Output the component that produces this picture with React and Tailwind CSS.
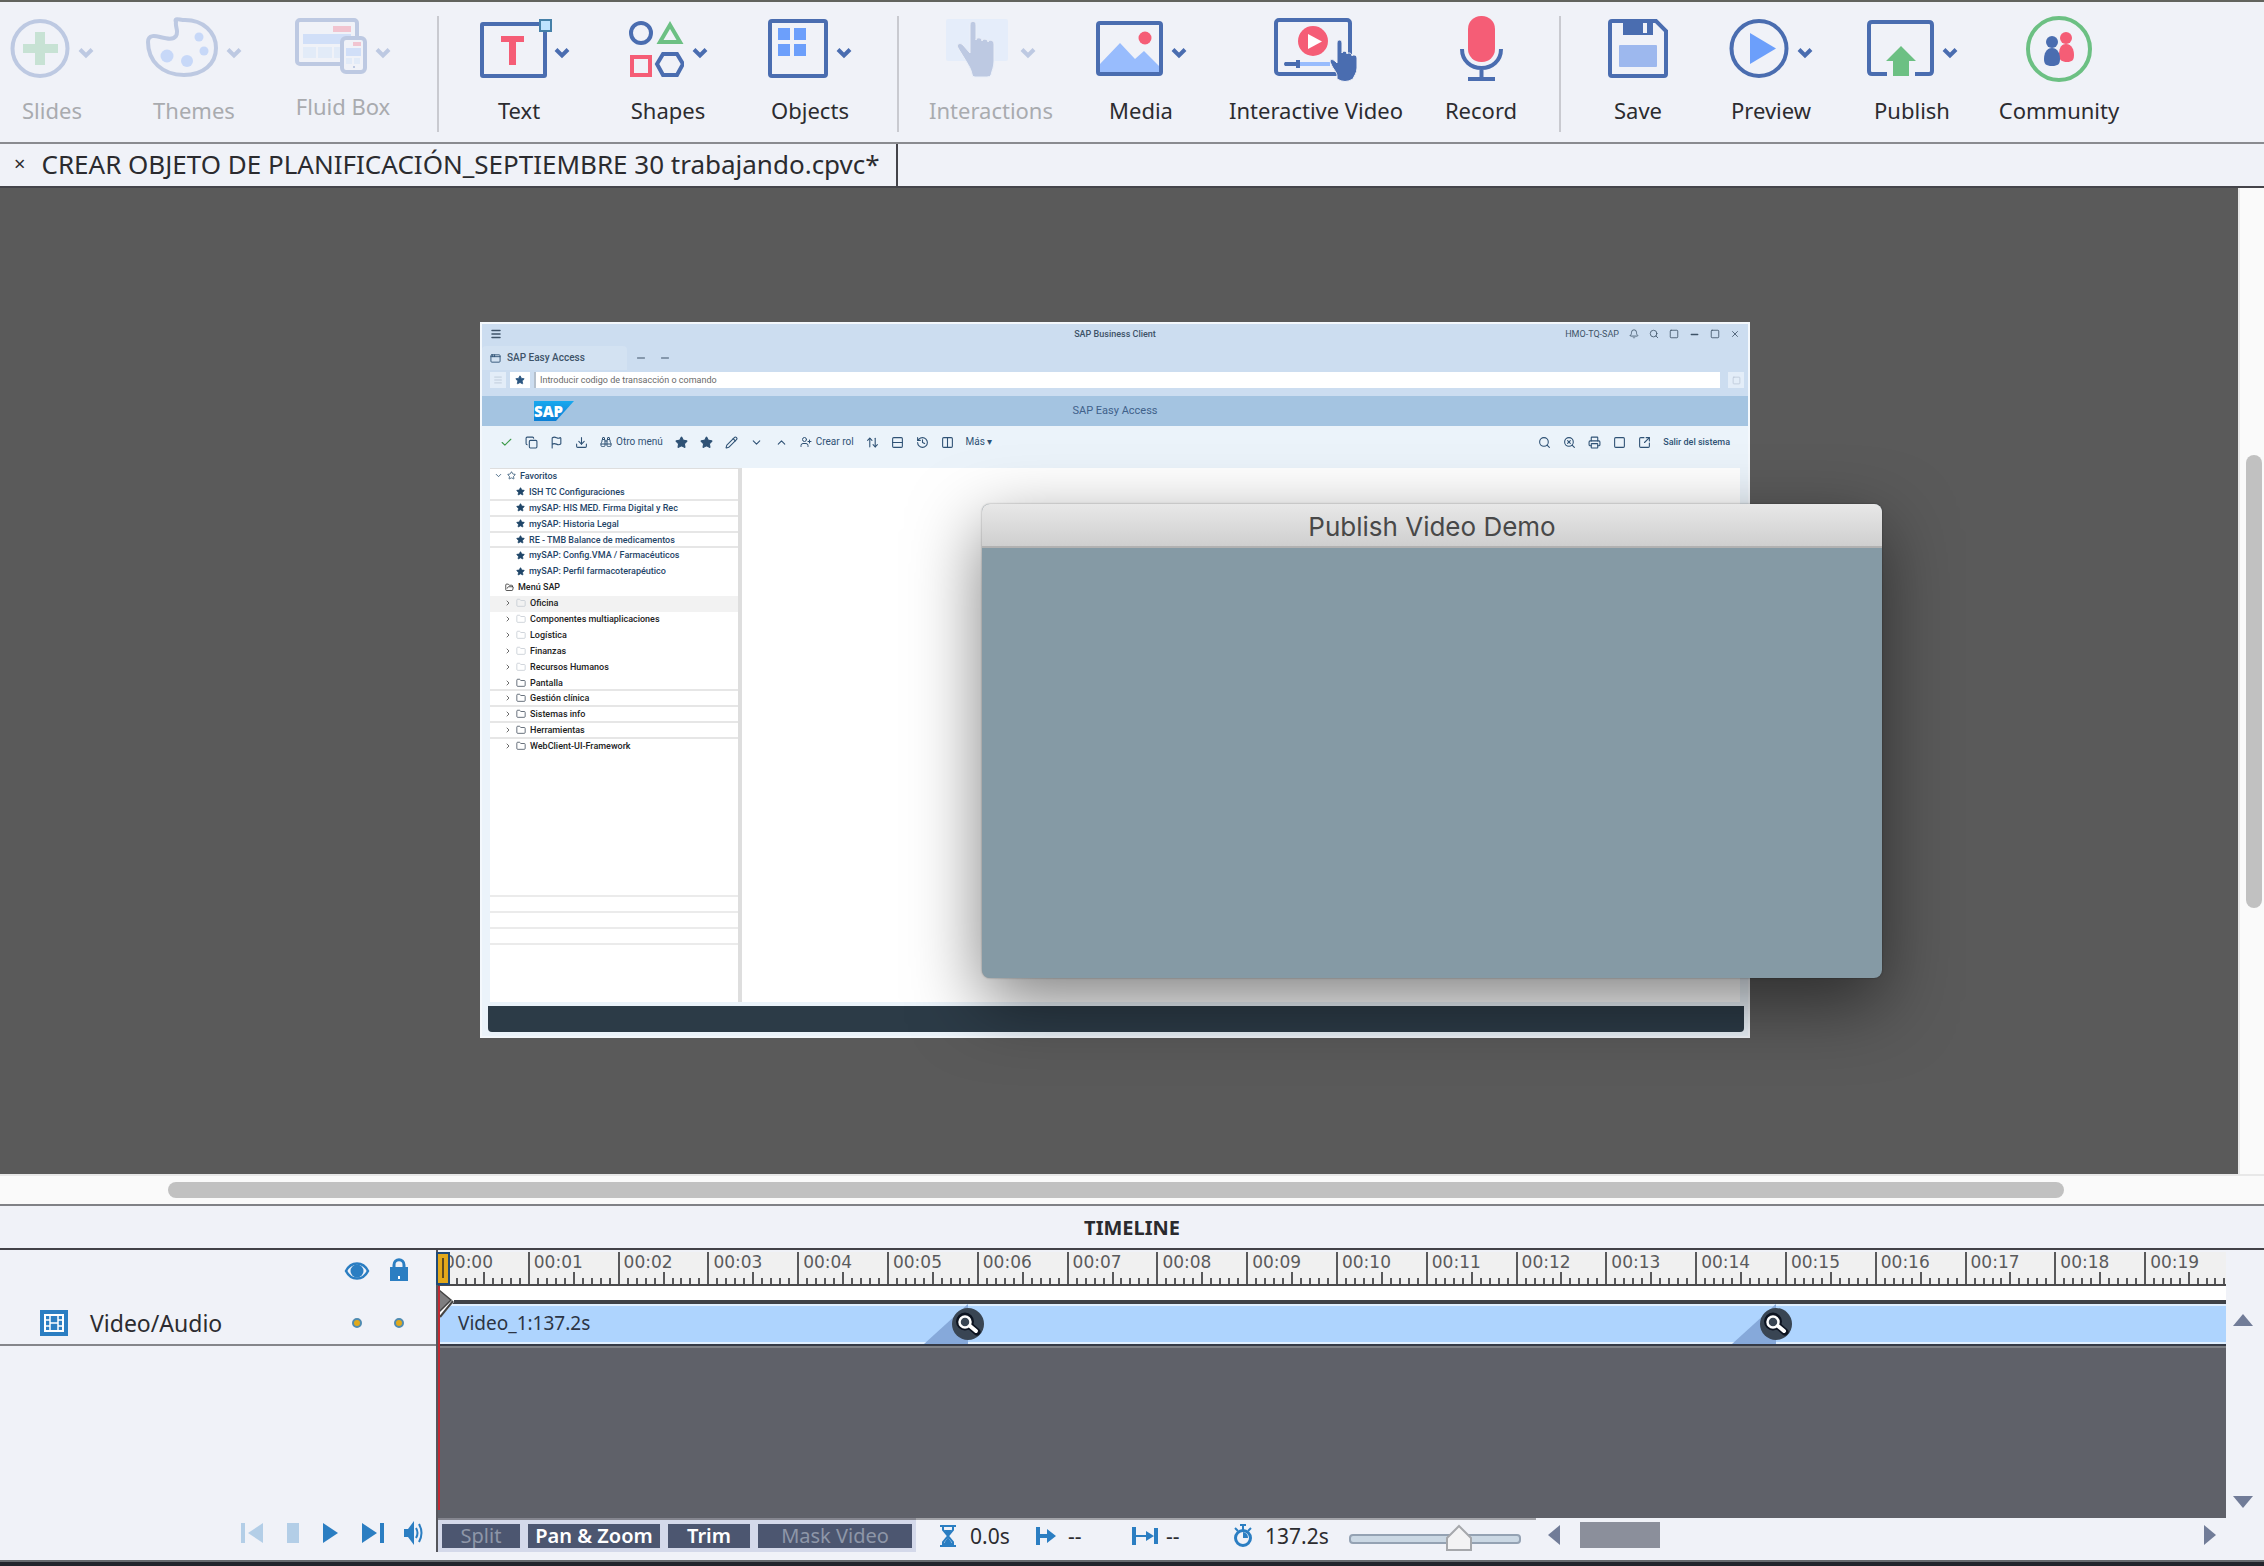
import { useState } from 'react';
import clsx from 'clsx';
import {
  Check, Copy, Flag, Download, Binoculars, Star, Pencil, ChevronDown, ChevronUp, ChevronRight, Menu,
  AppWindow, Search, SearchX, Printer, Square, SquareArrowOutUpRight, UserPlus, Folder, FolderOpen, Minus, X,
  ArrowUpDown, Columns2, Rows2, Bell, History,
} from 'lucide-react';

const BLUE = '#4a6db0';
const GREEN = '#6cc083';
const RED = '#f55d76';

const Chevron = () => (
  <svg width="16" height="66" viewBox="0 0 16 66" fill="none" stroke={BLUE} strokeWidth="4">
    <path d="M2 33.5 8 39.5 14 33.5" />
  </svg>
);

const HAND = 'M26 58c-1-5-3-8-6-13l-8-13c-2-4 2-6 5-3l7 8V9c0-5 6-5 6 0v15c0-3 6-3 6 1 1-3 6-2 6 1 1-3 6-2 6 2v17c0 6-2 9-3 14q-1 2-4 2H29q-3 0-3-3Z';

const ICONS = {
  slides: { w: 60, art: <>
    <circle cx="30" cy="32.5" r="27.5" fill="none" stroke={BLUE} strokeWidth="4" />
    <path d="M25 16h10v12h13v9H35v12H25V37H13v-9h12Z" fill={GREEN} />
  </> },
  themes: { w: 72, art: <>
    <path d="M30 6C28 1 33 4 39 4c18 0 31 12 31 28S57 59 38 59C16 59 2 45 2 26c0-8 8-6 12-5 8 2 13 3 16-1 3-5-1-9 0-14Z" fill="none" stroke={BLUE} strokeWidth="4" strokeLinejoin="round" />
    <g fill="#6c9ffb"><circle cx="21" cy="40" r="6.5" /><circle cx="41" cy="45" r="6" /><circle cx="58" cy="35" r="4.5" /><circle cx="53" cy="21" r="4.5" /></g>
  </> },
  fluid: { w: 72, art: <>
    <rect x="2" y="4" width="60" height="44" rx="3" fill="none" stroke={BLUE} strokeWidth="4" />
    <rect x="38" y="10" width="18" height="6" fill={RED} />
    <path d="M8 18h48v10H8Z" fill="#8db6fb" />
    <path d="M8 31h13v11H8ZM23 31h14v11H23ZM39 31h10v11H39Z" fill="#c3dcfb" />
    <rect x="47" y="22" width="23" height="34" rx="4" fill="#f0f2f8" stroke={BLUE} strokeWidth="4" />
    <rect x="58" y="26" width="8" height="4" fill={RED} />
    <path d="M51 32h15v8H51Z" fill="#8db6fb" />
    <path d="M51 42h6v6h-6ZM59 42h6v6h-6Z" fill="#c3dcfb" />
    <rect x="58" y="50" width="2" height="2" fill={BLUE} />
  </> },
  text: { w: 72, art: <>
    <rect x="2" y="8" width="63" height="52" rx="1" fill="none" stroke={BLUE} strokeWidth="4" />
    <rect x="60" y="4" width="11" height="11" fill="#bfe3ff" stroke="#4580a8" strokeWidth="2" />
    <path d="M21 20h23v6h-8v23h-7V26h-8Z" fill={RED} />
  </> },
  shapes: { w: 55, art: <g fill="none" strokeWidth="4">
    <circle cx="12" cy="17" r="10" stroke={BLUE} />
    <path d="M41 9 51 26H31Z" stroke={GREEN} />
    <rect x="3" y="41" width="18" height="18" stroke={RED} />
    <path d="M34 38h14l6 10-6 11H34l-6-11Z" stroke={BLUE} />
  </g> },
  objects: { w: 60, art: <>
    <rect x="2" y="5" width="56" height="55" rx="2" fill="none" stroke={BLUE} strokeWidth="4" />
    <path d="M10 12h12v12H10ZM26 12h12v12H26ZM10 28h12v12H10ZM26 28h12v12H26Z" fill="#6c9ffb" />
  </> },
  interactions: { w: 62, art: <>
    <rect width="62" height="42" y="3" rx="2" fill="#cfe3ff" />
    <path d={HAND} fill={BLUE} stroke="#dfeafb" strokeWidth="1" />
  </> },
  media: { w: 67, art: <>
    <path d="M4 48 24 27l15 16 9-8 16 16v6H4Z" fill="#98bcfd" />
    <circle cx="49" cy="22" r="6.5" fill={RED} />
    <rect x="2" y="7" width="63" height="51" rx="2" fill="none" stroke={BLUE} strokeWidth="4" />
  </> },
  interactive: { w: 84, art: <>
    <rect x="2" y="4" width="74" height="54" rx="3" fill="none" stroke={BLUE} strokeWidth="4" />
    <circle cx="39" cy="25" r="15" fill={RED} />
    <path d="M34 18 48 25.500 34 33Z" fill="#fff" />
    <path d="M26 46h30v4H26Z" fill="#98bcfd" />
    <path d="M11 46h11v-2h4v8h-4v-2H11q-2-2 0-4Z" fill={BLUE} />
    <path d="M63 60c0-4-4-7-6-12-2-4 0-6 4-3l2 2V27c0-4 5-4 5 0v10c1-3 5-2 5 1 1-2 5-1 5 2 1-2 5-1 5 2v10c0 5-3 8-4 11q-8 5-16 0Z" fill={BLUE} stroke="#f0f2f8" strokeWidth="1" />
  </> },
  record: { w: 43, art: <>
    <rect x="8" y="0" width="27" height="46" rx="13" fill={RED} />
    <path d="M2 33c0 12 9 19 19.500 19S41 45 41 33M21.500 52v12" fill="none" stroke={BLUE} strokeWidth="4" />
    <path d="M8 61h27v4H8Z" fill={BLUE} />
  </> },
  save: { w: 60, art: <>
    <path d="M4 5h44l10 10v43q0 2-2 2H4q-2 0-2-2V7q0-2 2-2Z" fill="none" stroke={BLUE} strokeWidth="4" />
    <path d="M15 5h30v14H15Z" fill={BLUE} />
    <path d="M35 7h4v10h-4Z" fill="#f0f2f8" />
    <rect x="11" y="29" width="38" height="22" rx="1" fill="#9db8ee" />
  </> },
  preview: { w: 60, art: <>
    <circle cx="30" cy="32.5" r="27.5" fill="none" stroke={BLUE} strokeWidth="4" />
    <path d="M21 17 47 32.500 21 48Z" fill="#6c9ffb" />
  </> },
  publish: { w: 67, art: <>
    <path d="M20 58H5q-3 0-3-3V9q0-3 3-3h57q3 0 3 3v46q0 3-3 3H48" fill="none" stroke={BLUE} strokeWidth="4" />
    <path d="M34 30 49 45h-7v15H26V45h-7Z" fill={GREEN} />
  </> },
  community: { w: 66, art: <>
    <circle cx="33" cy="33" r="31" fill="none" stroke={GREEN} strokeWidth="4" />
    <g fill={RED}><circle cx="40" cy="22" r="6" /><path d="M40 28c6 0 8 6 8 11s-2 7-7 7-8-2-8-7 1-11 7-11Z" /></g>
    <g fill={BLUE}><circle cx="26" cy="26" r="6" /><path d="M26 32c6 0 8 6 8 11s-2 7-8 7-8-2-8-7 2-11 8-11Z" /></g>
  </> },
};

const TOOL_GROUPS = [
  [
    { icon: 'slides', label: 'Slides', menu: true, off: true, box: 'w-[104px]' },
    { icon: 'themes', label: 'Themes', menu: true, off: true, box: 'w-[180px]' },
    { icon: 'fluid', label: 'Fluid Box', menu: true, off: true, box: 'w-[118px] mr-[35px]', gap: 'mt-2.5' },
  ],
  [
    { icon: 'text', label: 'Text', menu: true, box: 'w-[160px]', row: 'gap-0.5 pl-3' },
    { icon: 'shapes', label: 'Shapes', menu: true, box: 'w-[138px]' },
    { icon: 'objects', label: 'Objects', menu: true, box: 'w-[146px] mr-3.5' },
  ],
  [
    { icon: 'interactions', label: 'Interactions', menu: true, off: true, box: 'w-[184px]', row: 'gap-3' },
    { icon: 'media', label: 'Media', menu: true, box: 'w-[116px]' },
    { icon: 'interactive', label: 'Interactive Video', box: 'w-[234px]' },
    { icon: 'record', label: 'Record', box: 'w-24 mr-[30px]' },
  ],
  [
    { icon: 'save', label: 'Save', box: 'w-[154px]' },
    { icon: 'preview', label: 'Preview', menu: true, box: 'w-28' },
    { icon: 'publish', label: 'Publish', menu: true, box: 'w-[170px]' },
    { icon: 'community', label: 'Community', box: 'w-[124px]' },
  ],
];

function ToolButton({ icon, label, menu, off, box, row = 'gap-2', gap = 'mt-3.5' }) {
  const { w, art } = ICONS[icon];
  return (
    <button disabled={off} className={clsx('flex shrink-0 flex-col items-center', box)}>
      <span className={clsx('flex justify-center', row, off && 'opacity-30')}>
        <svg width={w} height="66" viewBox={`0 0 ${w} 66`}>{art}</svg>
        {menu && <Chevron />}
      </span>
      <span className={clsx('whitespace-nowrap text-[22px] leading-7', gap, off ? 'text-[#a9abaf]' : 'text-[#2c2c30]')}>{label}</span>
    </button>
  );
}

function Toolbar() {
  return (
    <nav className="flex h-[144px] items-start overflow-hidden border-t-2 border-b-2 border-t-[#62645e] border-b-[#8a8b90] bg-[#f0f2f8] pt-3.5">
      {TOOL_GROUPS.map((group, i) => (
        <div key={i} className={clsx('flex', i < 3 && 'h-[116px] border-r-2 border-[#c9cad0]')}>
          {group.map((t) => <ToolButton key={t.icon} {...t} />)}
        </div>
      ))}
    </nav>
  );
}

const FAVS = [
  'ISH TC Configuraciones', 'mySAP: HIS MED. Firma Digital y Rec', 'mySAP: Historia Legal',
  'RE - TMB Balance de medicamentos', 'mySAP: Config.VMA / Farmacéuticos', 'mySAP: Perfil farmacoterapéutico',
];
const MENU = [
  'Oficina', 'Componentes multiaplicaciones', 'Logística', 'Finanzas', 'Recursos Humanos', 'Pantalla',
  'Gestión clínica', 'Sistemas info', 'Herramientas', 'WebClient-UI-Framework',
];
const SAP_TOOLS = [Check, Copy, Flag, Download];
const SAP_TOOLS_MID = [Star, Star, Pencil, ChevronDown, ChevronUp];
const SAP_TOOLS_END = [ArrowUpDown, Rows2, History, Columns2];
const SAP_TOOLS_RIGHT = [Search, SearchX, Printer, Square, SquareArrowOutUpRight];

function SapTree() {
  const row = 'flex flex-1 items-center border-b-2';
  return (
    <div className="flex w-[252px] shrink-0 flex-col border-t border-r-4 border-[#dedede] bg-white text-[9px] leading-3 font-medium text-[#1f4568]">
      <ul className="flex h-[286px] flex-col">
        <li className={clsx(row, 'border-transparent pl-1 gap-1')}><ChevronDown size={9} /><Star size={9} />Favoritos</li>
        {FAVS.map((f, i) => (
          <li key={f} className={clsx(row, 'gap-1 pl-[26px]', i < 4 ? 'border-[#e6e6e6]' : 'border-transparent')}>
            <Star size={9} fill="currentColor" />{f}
          </li>
        ))}
        <li className={clsx(row, 'border-transparent gap-1 pl-[15px] text-[#222]')}><FolderOpen size={9} />Menú SAP</li>
        {MENU.map((m, i) => (
          <li key={m} className={clsx(row, 'gap-1 pl-[14px] text-[#222]', i === 0 && 'bg-[#f2f2f2]', i > 4 && i < 9 ? 'border-[#e6e6e6]' : 'border-transparent')}>
            <ChevronRight size={8} /><Folder size={10} className={i < 5 ? 'text-[#c6ccd4]' : 'text-[#4b5563]'} />{m}
          </li>
        ))}
      </ul>
      <div className="mt-[140px] h-[50px] border-y-2 border-[#ebebeb]">
        <div className="mt-3.5 h-[18px] border-y-2 border-[#ebebeb]" />
      </div>
    </div>
  );
}

function SapFrame() {
  return (
    <div className="flex h-full flex-col border-2 border-[#f4f8fc] bg-[#ebf3fa] font-['Roboto',sans-serif] text-[10px] leading-3 text-[#3e5368]">
      <div className="flex flex-col bg-[#ccddf0]">
        <div className="grid h-5 grid-cols-3 items-center px-2">
          <Menu size={12} strokeWidth={3} />
          <span className="text-center text-[9px] font-medium">SAP Business Client</span>
          <span className="flex items-center justify-end gap-2.5 text-[9px]">
            HMO-TQ-SAP <Bell size={10} /><Search size={10} /><Square size={10} /><Minus size={11} strokeWidth={3} /><Square size={10} /><X size={10} />
          </span>
        </div>
        <div className="flex h-[28px] items-center">
          <span className="flex h-6 w-[145px] items-center gap-1.5 rounded-t bg-[#d3e2f2] pl-2 font-medium"><AppWindow size={11} className="text-[#2f5275]" />SAP Easy Access</span>
          <Minus size={12} className="ml-2" /><Minus size={12} className="ml-3" />
        </div>
        <div className="flex h-[24px] items-start gap-1 pr-1 pl-2">
          <span className="flex h-4 w-4 items-center justify-center bg-[#e3edf8] text-[#b9c6d6]"><Menu size={10} /></span>
          <span className="flex h-4 w-5 items-center justify-center bg-white text-[#2a5580]"><Star size={10} fill="currentColor" /></span>
          <input aria-label="Transacción" readOnly value="Introducir codigo de transacción o comando" className="h-4 min-w-0 flex-1 border-l-2 border-[#b5c0cc] bg-white px-1 text-[9px] text-[#6a6a6a]" />
          <span className="ml-1 flex h-4 w-4 items-center justify-center bg-[#e3edf8] text-[#b9c6d6]"><Square size={9} /></span>
        </div>
      </div>
      <div className="grid h-[30px] grid-cols-3 items-center bg-[#a4c4e1]">
        <span className="ml-[52px] flex h-5 w-10 items-center bg-[linear-gradient(180deg,#18a8ee,#0a7fd6)] font-['Noto_Sans',sans-serif] text-[15px] leading-none font-black text-white [clip-path:polygon(0_0,100%_0,55%_100%,0_100%)]">SAP</span>
        <span className="text-center text-[11px] text-[#3f618a]">SAP Easy Access</span>
      </div>
      <div className="flex h-[42px] items-start gap-3 px-[18px] pt-2.5 text-[#2f5275]">
        {SAP_TOOLS.map((I, i) => <I key={i} size={13} className={i === 0 ? 'text-[#3c9a48]' : ''} />)}
        <span className="flex items-center gap-1"><Binoculars size={12} />Otro menú</span>
        {SAP_TOOLS_MID.map((I, i) => <I key={i} size={13} fill={i < 2 ? 'currentColor' : 'none'} />)}
        <span className="flex items-center gap-1"><UserPlus size={12} />Crear rol</span>
        {SAP_TOOLS_END.map((I, i) => <I key={i} size={13} />)}
        <span>Más ▾</span>
        <span className="ml-auto flex gap-3">{SAP_TOOLS_RIGHT.map((I, i) => <I key={i} size={13} />)}</span>
        <span className="text-[9px] font-medium">Salir del sistema</span>
      </div>
      <div className="flex flex-1 pr-2 pl-2">
        <SapTree />
        <div className="flex-1 bg-white" />
      </div>
      <div className="mr-1 ml-1.5 mt-1 mb-1 h-[26px] rounded-b bg-[#2c3b47]" />
    </div>
  );
}

function PublishDialog() {
  return (
    <section role="dialog" aria-label="Publish Video Demo" className="absolute top-[182px] left-[502px] flex h-[474px] w-[900px] flex-col overflow-hidden rounded-lg bg-[#859aa5] shadow-[0_24px_70px_rgba(0,0,0,0.5),0_0_2px_rgba(0,0,0,0.4)]">
      <h2 className="h-11 border-b-2 border-[#b1b1b1] bg-linear-to-b from-[#e8e8e8] to-[#cfcfcf] text-center font-['Inter',sans-serif] text-[26px] leading-[46px] text-[#484848]">Publish Video Demo</h2>
    </section>
  );
}

const SPAN = 19.91; // seconds visible in the ruler
const SECONDS = Array.from({ length: 20 }, (_, i) => i);
const ZOOMS = [5.9, 14.9];

function Ruler() {
  return (
    <div className="relative flex h-[36px] border-t-2 border-b-2 border-t-[#f0f2f8] border-b-[#4a4a4c] bg-[#f0f0f0]">
      {SECONDS.map((s) => (
        <div key={s} className={clsx('relative flex min-w-0 basis-0 items-end', s < 19 ? 'grow-[100]' : 'grow-[91]')}>
          {SECONDS.slice(0, 10).map((t) => (
            <i key={t} className={clsx('basis-0 border-l-2 border-[#58585a]', s === 19 && t === 9 ? 'grow' : 'grow-[10]', t === 0 ? 'h-8' : t === 5 ? 'h-3' : 'h-1.5')} />
          ))}
          <span className="absolute top-0 left-1.5 font-['DejaVu_Sans',sans-serif] text-[17px] leading-5 text-[#5a5a5c]">00:{String(s).padStart(2, '0')}</span>
        </div>
      ))}
      <span className="absolute top-0 -left-0.5 h-[33px] w-3.5 border-2 border-[#1f4a78] bg-[#e2a81b]"><i className="absolute top-1 left-1 h-5 w-0.5 bg-[#5c4a20]" /></span>
    </div>
  );
}

function Track() {
  return (
    <div className="relative h-[48px] border-t-4 border-b-2 border-t-[#3f4248] border-b-[#7f8287] bg-[#343a46] pb-0.5">
      <div className="flex h-10 items-center border-y-2 border-[#e0effe] bg-[#aed4fe] pb-0.5 pl-5 text-[19px] leading-6 text-[#2c3444]">Video_1:137.2s</div>
      {ZOOMS.map((z) => (
        <button key={z} aria-label="Pan and zoom" className="absolute top-0 h-10 w-[60px] -translate-x-11" style={{ left: `${(z / SPAN) * 100}%` }}>
          <svg width="60" height="40" viewBox="0 0 60 40">
            <path d="M44 0V40H0Z" fill="#86a9da" />
            <circle cx="44" cy="20" r="16" fill="#394553" />
            <path d="M45 21 53 28" stroke="#0c1320" strokeWidth="7" strokeLinecap="round" />
            <circle cx="41" cy="17.5" r="6" fill="none" stroke="#0c1320" strokeWidth="6" />
            <path d="M46 22 52 27" stroke="#fff" strokeWidth="4" strokeLinecap="round" />
            <circle cx="41" cy="18" r="5.500" fill="#394553" stroke="#fff" strokeWidth="2.500" />
          </svg>
        </button>
      ))}
      <svg className="absolute -top-4 left-0" width="16" height="30" viewBox="0 0 16 30">
        <path d="M0 0h16v14L2 30H0Z" fill="#fff" />
        <path d="M1 2 13 12 1 24Z" fill="#7e7e80" stroke="#444" strokeWidth="1.500" />
        <path d="M2 29 15 13" stroke="#444" strokeWidth="2" />
      </svg>
    </div>
  );
}

const PLAYER = [
  { name: 'Go to start', off: true, w: 22, d: 'M0 3h4v20H0ZM22 3v20L7 13Z' },
  { name: 'Stop', off: true, w: 12, d: 'M0 3h12v20H0Z' },
  { name: 'Play', w: 15, d: 'M0 3 15 13 0 23Z' },
  { name: 'Go to end', w: 22, d: 'M0 3 15 13 0 23ZM18 3h4v20h-4Z' },
];

function TrackHeads() {
  return (
    <aside className="flex w-[438px] shrink-0 flex-col border-r-2 border-[#55565c]">
      <div className="flex h-[54px] items-start justify-end gap-5 pt-2 pr-7">
        <svg width="26" height="24" viewBox="0 0 26 24"><path d="M2 13C7 3 19 3 24 13 19 23 7 23 2 13Z" fill="none" stroke="#2b7ec2" strokeWidth="2.500" /><circle cx="13" cy="13" r="6.500" fill="#2b7ec2" /></svg>
        <svg width="18" height="24" viewBox="0 0 18 24"><path d="M4 10V7c0-7 10-7 10 0v3" fill="none" stroke="#2b7ec2" strokeWidth="3" /><path d="M0 9h18v14H0Z" fill="#2b7ec2" /><path d="M8 18h2v3H8Z" fill="#fff" /></svg>
      </div>
      <div className="flex h-[42px] items-center border-b-2 border-[#85868b] pr-8 pb-0.5 pl-10">
        <svg width="28" height="26" viewBox="0 0 28 26">
          <path d="M0 0h28v26H0Z" fill="#2b7ec2" />
          <path d="M5 5h18v16H5Z" fill="none" stroke="#fff" strokeWidth="2" />
          <path d="M10 5v16M18 5v16M10 13h8M5 10h5M5 16h5M18 10h5M18 16h5" stroke="#fff" strokeWidth="1.500" />
        </svg>
        <span className="ml-[22px] flex-1 text-[23px] leading-7 text-[#2c2c30]">Video/Audio</span>
        <button aria-label="Toggle visibility" className="mr-8 h-2.5 w-2.5 rounded-full border-2 border-[#4f8bb0] bg-[#e0a91c]" />
        <button aria-label="Toggle lock" className="h-2.5 w-2.5 rounded-full border-2 border-[#4f8bb0] bg-[#e0a91c]" />
      </div>
      <div className="mt-auto mb-1.5 flex items-center justify-end gap-6 pr-3 text-[#2b7ec2]">
        {PLAYER.map((p) => (
          <button key={p.name} aria-label={p.name} disabled={p.off} className={p.off ? 'opacity-30' : ''}>
            <svg width={p.w} height="26" viewBox={`0 0 ${p.w} 26`} fill="currentColor"><path d={p.d} /></svg>
          </button>
        ))}
        <button aria-label="Volume" className="-ml-1">
          <svg width="20" height="26" viewBox="0 0 20 26" fill="currentColor"><path d="M0 9h4l6-8v24l-6-8H0Z" /><path d="M12 8q3 5 0 10M15 4q5 9 0 18" fill="none" stroke="currentColor" strokeWidth="2" /></svg>
        </button>
      </div>
    </aside>
  );
}

const EDITS = [
  { label: 'Split', off: true, w: 'w-[78px]' },
  { label: 'Pan & Zoom', w: 'w-[132px]' },
  { label: 'Trim', w: 'w-[82px]' },
  { label: 'Mask Video', off: true, w: 'w-[154px]' },
];

function BottomBar() {
  const [zoom, setZoom] = useState(64);
  return (
    <div className="flex h-[34px] items-stretch text-[20px] leading-6 text-[#2c2c30]">
      <div className="flex items-center gap-2 border-t-2 border-[#85868f] bg-[#d4d9ea] px-1">
        {EDITS.map((e) => (
          <button key={e.label} disabled={e.off} className={clsx('h-6 bg-[#4c5670]', e.w, e.off ? 'text-[#8e96a8]' : 'font-semibold text-white')}>{e.label}</button>
        ))}
      </div>
      <div className="flex w-[620px] shrink-0 items-center border-t-2 border-[#a2a3a8] pl-6 text-[21px]">
        <svg width="16" height="22" viewBox="0 0 16 22" fill="none" stroke="#2b7ec2" strokeWidth="2"><path d="M0 1h16M0 21h16M3 1v4l5 6 5-6V1M3 21v-4l5-6 5 6v4" /><path d="M4 20 8 14 12 20ZM6 6h4l-2 3Z" fill="#2b7ec2" /></svg>
        <span className="ml-3.5 w-[66px]">0.0s</span>
        <svg width="20" height="18" viewBox="0 0 20 18" fill="#2b7ec2"><path d="M0 0h4v7h7V2l9 7-9 7v-5H4v7H0Z" /></svg>
        <span className="ml-3 w-[64px]">--</span>
        <svg width="26" height="18" viewBox="0 0 26 18" fill="#2b7ec2"><path d="M0 0h4v8h10V4l8 5-8 5v-4H4v8H0ZM22 1h4v16h-4Z" /></svg>
        <span className="ml-2 w-[67px]">--</span>
        <svg width="20" height="24" viewBox="0 0 20 24"><circle cx="10" cy="14" r="7.500" fill="none" stroke="#2b7ec2" strokeWidth="3" /><path d="M7 1h6M10 1v5M2 4l3 3M18 4l-3 3" stroke="#2b7ec2" strokeWidth="2" /><path d="M10 8v6h5q0-5-5-6Z" fill="#2b7ec2" /></svg>
        <span className="ml-3 w-[84px]">137.2s</span>
        <span className="relative flex h-full w-[172px] items-center">
          <input type="range" aria-label="Timeline zoom" value={zoom} onChange={(e) => setZoom(Number(e.target.value))} className="mt-1.5 h-2.5 w-full appearance-none rounded-sm border-2 border-[#94a2b3] bg-[#cbd8e4] opacity-100 [&::-webkit-slider-thumb]:h-6 [&::-webkit-slider-thumb]:w-6 [&::-webkit-slider-thumb]:appearance-none" />
          <svg className="pointer-events-none absolute top-1 -translate-x-1/2" style={{ left: `${zoom}%` }} width="28" height="28" viewBox="0 0 28 28">
            <path d="M14 2 26 14V26H2V14Z" fill="#f3f3f4" stroke="#a6a8ac" strokeWidth="2" />
          </svg>
        </span>
      </div>
      <div className="flex flex-1 items-center gap-5 pr-2.5 pl-3">
        <button aria-label="Scroll left"><svg width="12" height="20" viewBox="0 0 12 20"><path d="M12 0V20L0 10Z" fill="#717c98" /></svg></button>
        <span className="h-[26px] w-20 bg-[#8b8f9b]" />
        <button aria-label="Scroll right" className="ml-auto"><svg width="12" height="20" viewBox="0 0 12 20"><path d="M0 0V20L12 10Z" fill="#717c98" /></svg></button>
      </div>
    </div>
  );
}

function Timeline() {
  return (
    <section className="border-b-4 border-[#22232b] bg-[#f0f2f8]">
      <h2 className="border-t-2 border-b-2 border-t-[#808186] border-b-[#424248] pt-0.5 text-center text-[20px] leading-10 font-bold text-[#2a2a2e]">TIMELINE</h2>
      <div className="flex border-b-2 border-[#67696e] pb-2">
        <TrackHeads />
        <div className="relative flex min-w-0 flex-1 flex-col">
          <Ruler />
          <div className="h-3.5 bg-white" />
          <Track />
          <div className="h-[170px] bg-[#5f6169]" />
          <BottomBar />
          <span className="absolute top-9 left-0 h-56 w-0.5 bg-[#c22a32]" />
        </div>
        <div className="flex w-[38px] flex-col items-center pt-16 pr-1 pb-11">
          <button aria-label="Scroll up"><svg width="20" height="12" viewBox="0 0 20 12"><path d="M10 0 20 12H0Z" fill="#717c98" /></svg></button>
          <button aria-label="Scroll down" className="mt-auto"><svg width="20" height="12" viewBox="0 0 20 12"><path d="M0 0H20L10 12Z" fill="#717c98" /></svg></button>
        </div>
      </div>
    </section>
  );
}

export default function App() {
  return (
    <div className="flex min-h-screen flex-col bg-[#f0f2f8] font-['Noto_Sans',sans-serif]">
      <Toolbar />
      <div className="flex h-11 border-b-2 border-[#44444a]">
        <div className="flex items-center gap-4 border-r-2 border-[#44444a] pr-4 pb-0.5 pl-3.5 text-[26px] leading-8 text-[#2b2b2f]">
          <button aria-label="Close file" className="text-[20px] leading-6">×</button>
          <span>CREAR OBJETO DE PLANIFICACIÓN_SEPTIEMBRE 30 trabajando.cpvc*</span>
        </div>
      </div>
      <main className="flex flex-1">
        <div className="flex flex-1 items-center justify-center overflow-hidden bg-[#5a5a5a] pr-2 pb-0.5">
          <div className="relative h-[716px] w-[1270px] shrink-0">
            <SapFrame />
            <PublishDialog />
          </div>
        </div>
        <div className="flex w-[26px] flex-col border-l-2 border-[#e8e8e8] bg-[#fafafa] pt-[267px] pr-0.5 pl-1.5">
          <div className="h-[453px] rounded-full bg-[#c1c1c1]" />
        </div>
      </main>
      <div className="border-t-2 border-[#e8e8e8] bg-[#fafafa] pt-1.5 pr-[200px] pb-1.5 pl-[168px]">
        <div className="h-4 rounded-full bg-[#c1c1c1]" />
      </div>
      <Timeline />
    </div>
  );
}
